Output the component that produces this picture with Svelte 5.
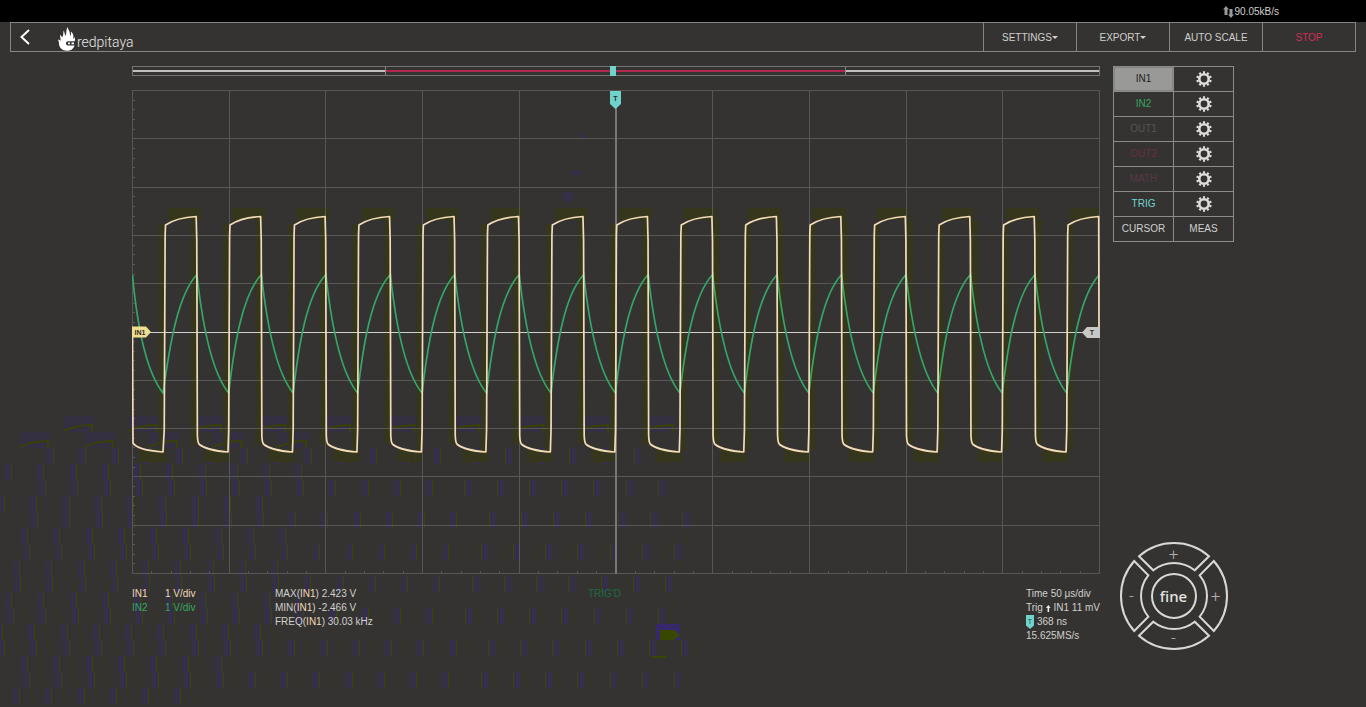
<script lang="ts">
	type Channel = { name: string; tone: string };

	const channels: Channel[] = [
		{ name: 'IN1', tone: 'selected' },
		{ name: 'IN2', tone: 'green' },
		{ name: 'OUT1', tone: 'off-gray' },
		{ name: 'OUT2', tone: 'off-red' },
		{ name: 'MATH', tone: 'off-plum' },
		{ name: 'TRIG', tone: 'teal' }
	];

	const measures = [
		{ fn: 'MAX', value: '2.423 V' },
		{ fn: 'MIN', value: '-2.466 V' },
		{ fn: 'FREQ', value: '30.03 kHz' }
	];

	// 10 x 10 divisions, 15 signal periods across the screen
	const W = 967;
	const H = 483;
	const period = W / 15;
	const half = period / 2;
	const divs = Array.from({ length: 11 }, (_, i) => i);
	const ticks = Array.from({ length: 50 }, (_, i) => i);
	const edges = Array.from({ length: 15 }, (_, i) => half + 0.5 + i * period);

	function squarePath() {
		let d = 'M0.5 240 L1 353 Q5 360 31 362';
		for (const x of edges) {
			const top = x + half;
			d += ` L${x - 0.5} 340 L${x + 0.4} 145 L${x + 0.8} 135 Q${x + 12} 127.5 ${top - 0.8} 126.5`;
			if (top < W - 5) {
				d += ` L${top - 0.2} 150 L${top + 0.4} 345 Q${top + 0.6} 353 ${top + 2.5} 354.5`;
				d += ` Q${top + 10} 360.5 ${x + period - 1.2} 362`;
			} else {
				d += ` L${W} 242`;
			}
		}
		return d;
	}

	function trianglePath() {
		let d = 'M0.5 185 C6 245 16 284 31 303';
		for (const x of edges) {
			const top = x + half;
			d += ` C${x + 5} 255 ${x + 13} 205 ${top} 184.5`;
			if (top < W - 5) d += ` C${top + 6} 240 ${top + 16} 284 ${x + period - 0.5} 303`;
		}
		return d;
	}

	// afterglow rows: y, first x, last x
	const trails = [
		[448, 53, 665], [464, 11, 302], [480, 45, 660], [496, 4, 294],
		[512, 37, 686], [528, 27, 285], [544, 29, 677], [560, 19, 277],
		[576, 20, 668], [592, 11, 302], [608, 13, 659], [624, 2, 262],
		[640, 4, 682], [656, 27, 222], [672, 29, 677], [688, 19, 212]
	];
	const step = 32.25;

	const marks = trails.flatMap(([y, from, to]) =>
		Array.from({ length: Math.floor((to - from) / step) + 1 }, (_, i) => ({
			x: Math.round(from + i * step),
			y
		}))
	);
	const arcs = [
		...Array.from({ length: 10 }, (_, i) => ({ x: 64 + i * 64.5, y: 431 })),
		...Array.from({ length: 5 }, (_, i) => ({ x: 20 + i * 64.5, y: 447 }))
	];
</script>

{#snippet gear()}
	<svg class="gear" viewBox="0 0 16 16" aria-hidden="true">
		<circle cx="8" cy="8" r="4.7" stroke-width="2.6" />
		<circle cx="8" cy="8" r="6.7" stroke-width="2.2" pathLength="100" stroke-dasharray="5 5" stroke-dashoffset="2.5" transform="rotate(-90 8 8)" />
	</svg>
{/snippet}

<div class="page">
	<svg class="afterglow" aria-hidden="true">
		{#each marks as m (m.y + '-' + m.x)}
			<rect class="shade" x={m.x > 460 ? m.x + 1 : m.x - 6} y={m.y} width="6" height="16" />
			<rect class="spark" x={m.x} y={m.y} width="1" height="16" />
			{#if m.y > 600}
				<path class="slash" d="M{m.x + 11} {m.y + 1} l4 14" />
			{:else if m.y > 540}
				<path class="slash" d="M{m.x - 3} {m.y + 1} l-8 14" />
			{/if}
		{/each}
		{#each arcs as a (a.x + '-' + a.y)}
			<rect class="shade soft" x={a.x} y={a.y - 15} width="30" height="16" />
			<path class="arc" d="M{a.x} {a.y} q12 -6 28 -6 v7" />
		{/each}
		<rect class="shade strong" x="656" y="624" width="24" height="16" />
		<path class="blot" d="M660 630 h14 l6 5 l-6 5 h-14z M652 656 h14 v2 h-14z" />
		<path class="slash" d="M685 530 l2 14 M678 560 l1 14 M671 594 l2 14 l-5 15" />
		<rect class="shade" x="580" y="133" width="4" height="5" />
		<rect class="shade" x="570" y="171" width="10" height="4" />
		<path class="shade" d="M563 192 h10 v6 l-5 5 l-5 -5z" />
	</svg>

	<div class="topbar">
		<svg viewBox="0 0 11 12" aria-hidden="true">
			<path d="M3 0 L6 3.500 H4.500 V9 H1.500 V3.500 H0z M8 12 L5 8.500 H6.500 V3 H9.500 V8.500 H11z" />
		</svg>
		<span>90.05kB/s</span>
	</div>

	<header>
		<a class="back" href="#back" aria-label="Back">
			<svg viewBox="0 0 10 16"><path d="M9 1 L1.5 8 L9 15" /></svg>
		</a>
		<a class="logo" href="#home">
			<svg viewBox="0 0 18 24" aria-hidden="true">
				<path d="M9.5 0 C10 3 12.500 4 12 9 C13 8 13.300 6.500 12.800 4.500 C15.500 6.500 15.800 9 15 12 C16 11.500 16 10.500 15.800 9.500 C17.500 11.500 17.300 13 16.600 14.300 H10 C7.300 14.300 7.300 18.500 10 18.500 H16.600 C15.600 22 12.800 23.700 9 23.700 C4 23.700 1 20.500 1 16.500 C1 15 0.500 14 0 12.500 C1.300 12.800 2 13.300 2.500 14 C3 11.500 1.500 10 2.300 7.500 C3 9 3.600 9.700 4.500 10 C5.700 7.500 5 5.500 5.700 3.500 C6.600 5 6.700 7.500 7.500 9 C9 6 7.700 3 9.500 0z" />
				<path d="M10 15.500 h2 v1.700 h-2z M13.500 15.500 h2.500 v1.700 h-2.500z" />
			</svg>
			<span>redpitaya</span>
		</a>
		<nav>
			<button>SETTINGS<i class="caret"></i></button>
			<button>EXPORT<i class="caret"></i></button>
			<button>AUTO SCALE</button>
			<button class="stop">STOP</button>
		</nav>
	</header>

	<main>
		<section class="scope">
			<div class="overview">
				<span class="buffer"></span>
				<span class="buffer visible"></span>
				<span class="buffer"></span>
				<span class="handle"></span>
			</div>

			<svg class="plot" viewBox="0 0 968 484" role="img" aria-label="Oscilloscope traces">
				<g class="halo">
					{#each edges as x, i (x)}
						<rect x={i < 8 ? x - 6 : x + 1} y="134" width="5" height="226" />
						<rect x={x + 3} y="118" width="33" height="12" />
						<rect x={i < 8 ? x + half - 6 : x + half + 1} y="130" width="6" height="224" />
						<rect x={x - 25} y="360" width="26" height="12" />
					{/each}
				</g>
				<g class="grid">
					{#each divs as i (i)}
						<path d="M{Math.round((i * W) / 10) + 0.5} 0.5 V{H + 0.5}" />
						<path d="M0.5 {Math.round((i * H) / 10) + 0.5} H{W + 0.5}" />
					{/each}
					{#each ticks as i (i)}
						<path d="M0 {Math.round((i * H) / 50) + 0.5} h3" />
						<path d="M{Math.round((i * W) / 50) + 0.5} {H} v-2" />
					{/each}
				</g>
				<path class="trigger-time" d="M484 18 V484" />
				<path class="zero" d="M18 242.500 H952" />
				<path class="in2" d={trianglePath()} />
				<path class="in1" d={squarePath()} />
				<path class="tag-time" d="M478 1 h11 v13 l-5.500 5 l-5.500 -5z" />
				<text x="483.5" y="11" class="tag-text">T</text>
				<path class="tag-in1" d="M0 236.500 h14 l5 5.500 l-5 5.500 h-14z" />
				<text x="8" y="245" class="tag-text">IN1</text>
				<path class="tag-level" d="M968 237 h-13 l-5 5.500 l5 5.500 h13z" />
				<text x="960" y="245" class="tag-text">T</text>
			</svg>

			<div class="readouts">
				<div class="scales">
					<span class="cream">IN1</span><span class="cream">1 V/div</span>
					<span class="green">IN2</span><span class="green">1 V/div</span>
				</div>
				<div>
					{#each measures as m (m.fn)}
						<div>{m.fn}(<span class="cream">IN1</span>) {m.value}</div>
					{/each}
				</div>
				<div class="status">TRIG'D</div>
				<div>
					<div>Time 50 μs/div</div>
					<div class="line">
						Trig
						<svg class="rise" viewBox="0 0 6 9" aria-hidden="true"><path d="M3 0 L6 4 H4 V9 H2 V4 H0z" /></svg>
						IN1 11 mV
					</div>
					<div class="line">
						<svg class="pin" viewBox="0 0 8 14" aria-hidden="true">
							<path d="M0 0 h8 v10.500 l-4 3.500 l-4 -3.500z" />
							<text x="4" y="9">T</text>
						</svg>
						368 ns
					</div>
					<div>15.625MS/s</div>
				</div>
			</div>
		</section>

		<aside>
			<div class="channels">
				{#each channels as ch (ch.name)}
					<button class={ch.tone}>{ch.name}</button>
					<button aria-label="{ch.name} settings">{@render gear()}</button>
				{/each}
				<button>CURSOR</button>
				<button>MEAS</button>
			</div>

			<div class="joystick">
				<svg viewBox="-54 -54 108 108" aria-hidden="true">
					{#each [0, 90, 180, 270] as angle (angle)}
						<path d="M-35 -39.800 A53 53 0 0 1 35 -39.800 L20.700 -25.700 A33 33 0 0 0 -20.700 -25.700z" transform="rotate({angle})" />
					{/each}
					<circle r="22" />
				</svg>
				<button class="up" aria-label="Scale up">+</button>
				<button class="left" aria-label="Time down">-</button>
				<button class="fine">fine</button>
				<button class="right" aria-label="Time up">+</button>
				<button class="down" aria-label="Scale down">-</button>
			</div>
		</aside>
	</main>
</div>

<style>
	:global(body) {
		background: #343331;
	}

	.page {
		position: relative;
		min-height: 100vh;
		overflow: hidden;
		font: 10px/14px 'Liberation Sans', Arial, sans-serif;
		color: #d0d0ce;
	}

	button {
		display: flex;
		align-items: center;
		justify-content: center;
		padding: 0;
		border: 0;
		background: none;
		color: inherit;
		font: inherit;
		cursor: pointer;
	}

	.afterglow {
		position: absolute;
		inset: 0;
		width: 100%;
		height: 100%;
	}

	.shade {
		fill: #352f4a;
	}

	.shade.soft {
		fill: #352f42;
	}

	.shade.strong {
		fill: #36286a;
	}

	.spark,
	.blot {
		fill: #394800;
	}

	.slash,
	.arc {
		fill: none;
		stroke: #36391c;
	}

	.arc {
		stroke: #384204;
		stroke-width: 2;
	}

	.topbar {
		position: relative;
		display: flex;
		align-items: center;
		justify-content: flex-end;
		gap: 1px;
		height: 22px;
		padding: 1px 87px 0 0;
		box-sizing: border-box;
		background: #000;
	}

	.topbar svg {
		width: 11px;
		height: 12px;
		fill: #999;
	}

	header {
		position: relative;
		display: flex;
		height: 30px;
		margin: 0 10px;
		box-sizing: border-box;
		border: 1px solid #858583;
	}

	.back {
		display: flex;
		align-items: center;
		width: 47px;
		padding-left: 9px;
		box-sizing: border-box;
	}

	.back svg {
		width: 10px;
		height: 16px;
		fill: none;
		stroke: #fff;
		stroke-width: 2;
	}

	.logo {
		display: flex;
		align-items: flex-end;
		gap: 1px;
		color: #e8e8e8;
		text-decoration: none;
		font: 300 14px/18px Roboto, sans-serif;
	}

	.logo svg {
		width: 18px;
		height: 24px;
		fill: #fff;
	}

	nav {
		display: flex;
		margin-left: auto;
	}

	nav button {
		width: 93px;
		padding-top: 1px;
		border-left: 1px solid #858583;
	}

	.caret {
		border: 3px solid transparent;
		border-top-color: currentColor;
		border-bottom: 0;
	}

	.stop {
		color: #d02e56;
	}

	main {
		position: relative;
		display: flex;
		gap: 13px;
		margin: 14px 132px 0;
	}

	.scope {
		flex: 1;
		min-width: 0;
	}

	.overview {
		position: relative;
		display: grid;
		grid-template-columns: 26.1% 47.7% 1fr;
		align-items: center;
		height: 10px;
		box-sizing: border-box;
		border: 1px solid #757573;
	}

	.buffer {
		display: flex;
		align-items: center;
		height: 8px;
	}

	.buffer::before {
		content: '';
		flex: 1;
		height: 2px;
		background: #c0c0be;
	}

	.buffer.visible {
		border: solid #858583;
		border-width: 0 1px;
	}

	.buffer.visible::before {
		background: #b02850;
	}

	.handle {
		position: absolute;
		left: 49.4%;
		top: -1px;
		width: 6px;
		height: 10px;
		background: #6fd3cb;
	}

	.plot {
		display: block;
		width: 100%;
		margin-top: 14px;
		fill: none;
	}

	.halo {
		fill: #35361c;
	}

	.grid {
		stroke: #575755;
	}

	.trigger-time {
		stroke: #777775;
		stroke-width: 2;
	}

	.zero {
		stroke: #d0d0ce;
		stroke-width: 1;
	}

	.in1 {
		stroke: #f3dcb8;
		stroke-width: 1.7;
		stroke-linejoin: round;
	}

	.in2 {
		stroke: #34a668;
		stroke-width: 1.7;
	}

	.tag-time,
	.pin path {
		fill: #6fd3cb;
	}

	.tag-in1 {
		fill: #f0dd90;
	}

	.tag-level {
		fill: #c8c8c6;
	}

	.tag-text {
		fill: #2c2c2a;
		font-size: 7px;
		font-weight: bold;
		text-anchor: middle;
	}

	.readouts {
		display: grid;
		grid-template-columns: 143px 313px 1fr 74px;
		padding: 13px 0 7px;
		white-space: nowrap;
	}

	.scales {
		display: grid;
		grid-template-columns: 33px auto;
		align-content: start;
		justify-content: start;
	}

	.cream {
		color: #f0d9b8;
	}

	.green {
		color: #34a860;
	}

	.status {
		color: #1c6b42;
	}

	.line {
		display: flex;
		align-items: center;
		gap: 3px;
	}

	.rise {
		width: 6px;
		height: 9px;
		fill: #eee;
	}

	.pin {
		width: 8px;
		height: 14px;
	}

	.pin text {
		fill: #2c4c4a;
		font-size: 7px;
		text-anchor: middle;
	}

	aside {
		display: flex;
		flex-direction: column;
		align-items: center;
		justify-content: space-between;
		width: 121px;
	}

	.channels {
		display: grid;
		grid-template-columns: 1fr 1fr;
		gap: 1px;
		width: 100%;
		padding: 1px;
		box-sizing: border-box;
		background: #8b8b89;
	}

	.channels button {
		height: 24px;
		background: #343331;
	}

	.channels .selected {
		border: 1px solid #858583;
		background: #999997;
		color: #222;
	}

	.channels .green {
		color: #34a860;
	}

	.channels .off-gray {
		color: #555552;
	}

	.channels .off-red {
		color: #65303c;
	}

	.channels .off-plum {
		color: #573848;
	}

	.channels .teal {
		color: #70d6cc;
	}

	.gear {
		width: 16px;
		height: 16px;
		fill: none;
		stroke: #dededc;
	}

	.joystick {
		position: relative;
		display: grid;
		grid-template: 24px 1fr 24px / 24px 1fr 24px;
		grid-template-areas:
			'. up .'
			'left fine right'
			'. down .';
		width: 108px;
		height: 108px;
		color: #b0b0ae;
		font: 300 17px/20px Roboto, sans-serif;
	}

	.joystick svg {
		position: absolute;
		inset: 0;
		fill: none;
		stroke: #d8d8d6;
		stroke-width: 2;
	}

	.joystick button {
		position: relative;
	}

	.up {
		grid-area: up;
	}

	.left {
		grid-area: left;
	}

	.right {
		grid-area: right;
	}

	.down {
		grid-area: down;
	}

	.joystick .fine {
		grid-area: fine;
		color: #e4e4e2;
		font: 500 15px/20px 'Noto Sans', sans-serif;
	}
</style>
